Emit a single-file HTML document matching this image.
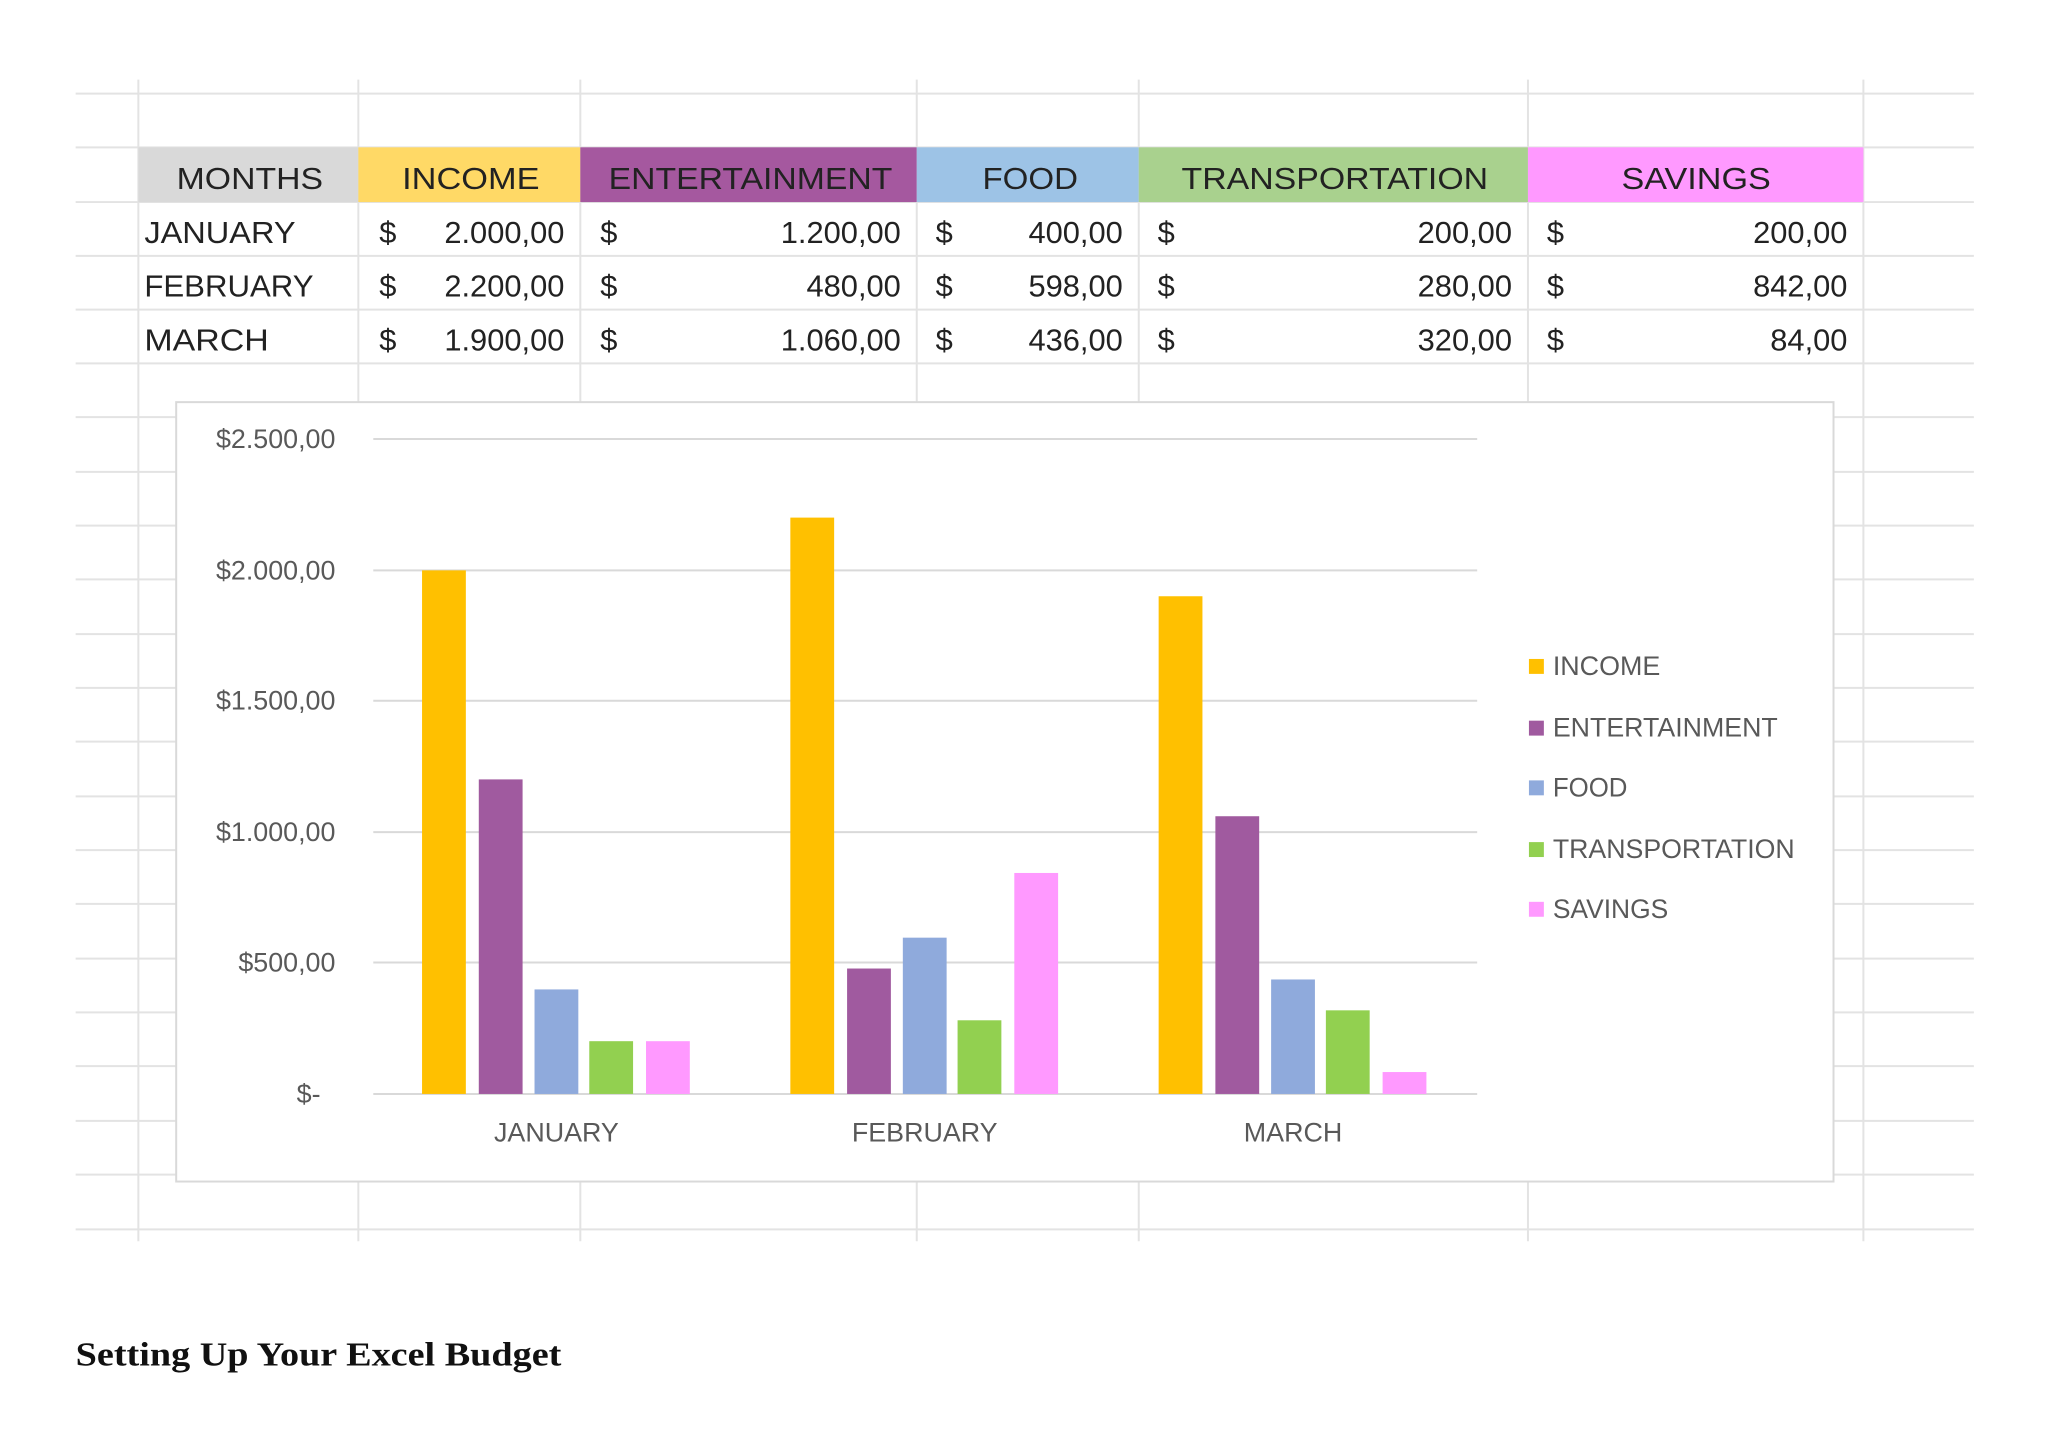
<!DOCTYPE html>
<html><head><meta charset="utf-8"><style>
html,body{margin:0;padding:0;background:#fff;}
svg{display:block;}
</style></head><body>
<svg width="2048" height="1451" viewBox="0 0 2048 1451" xmlns="http://www.w3.org/2000/svg" font-family="Liberation Sans, sans-serif">
<rect width="2048" height="1451" fill="#fff"/>
<g transform="scale(0.9954)">
<g stroke="#e3e3e3" stroke-width="2">
<line x1="76" y1="94" x2="1983" y2="94"/>
<line x1="76" y1="148" x2="1983" y2="148"/>
<line x1="76" y1="203" x2="1983" y2="203"/>
<line x1="76" y1="257" x2="1983" y2="257"/>
<line x1="76" y1="311" x2="1983" y2="311"/>
<line x1="76" y1="365" x2="1983" y2="365"/>
<line x1="76" y1="419" x2="1983" y2="419"/>
<line x1="76" y1="474" x2="1983" y2="474"/>
<line x1="76" y1="528" x2="1983" y2="528"/>
<line x1="76" y1="582" x2="1983" y2="582"/>
<line x1="76" y1="637" x2="1983" y2="637"/>
<line x1="76" y1="691" x2="1983" y2="691"/>
<line x1="76" y1="745" x2="1983" y2="745"/>
<line x1="76" y1="800" x2="1983" y2="800"/>
<line x1="76" y1="854" x2="1983" y2="854"/>
<line x1="76" y1="908" x2="1983" y2="908"/>
<line x1="76" y1="963" x2="1983" y2="963"/>
<line x1="76" y1="1017" x2="1983" y2="1017"/>
<line x1="76" y1="1071" x2="1983" y2="1071"/>
<line x1="76" y1="1126" x2="1983" y2="1126"/>
<line x1="76" y1="1180" x2="1983" y2="1180"/>
<line x1="76" y1="1235" x2="1983" y2="1235"/>
<line x1="139" y1="80" x2="139" y2="1247"/>
<line x1="360" y1="80" x2="360" y2="1247"/>
<line x1="583" y1="80" x2="583" y2="1247"/>
<line x1="921" y1="80" x2="921" y2="1247"/>
<line x1="1144" y1="80" x2="1144" y2="1247"/>
<line x1="1535" y1="80" x2="1535" y2="1247"/>
<line x1="1872" y1="80" x2="1872" y2="1247"/>
</g>
<rect x="139" y="148" width="221" height="55" fill="#d9d9d9"/>
<rect x="360" y="148" width="223" height="55" fill="#ffd966"/>
<rect x="583" y="148" width="338" height="55" fill="#a5589f"/>
<rect x="921" y="148" width="223" height="55" fill="#9dc3e6"/>
<rect x="1144" y="148" width="391" height="55" fill="#a9d18e"/>
<rect x="1535" y="148" width="337" height="55" fill="#ff99ff"/>
<g font-size="31" fill="#222" text-anchor="middle">
<text x="251" y="190" textLength="147" lengthAdjust="spacingAndGlyphs">MONTHS</text>
<text x="473" y="190" textLength="138" lengthAdjust="spacingAndGlyphs">INCOME</text>
<text x="754" y="190" textLength="285" lengthAdjust="spacingAndGlyphs">ENTERTAINMENT</text>
<text x="1035" y="190" textLength="96" lengthAdjust="spacingAndGlyphs">FOOD</text>
<text x="1341" y="190" textLength="308" lengthAdjust="spacingAndGlyphs">TRANSPORTATION</text>
<text x="1704" y="190" textLength="150" lengthAdjust="spacingAndGlyphs">SAVINGS</text>
</g>
<g font-size="31" fill="#222">
<text x="145" y="244" textLength="152" lengthAdjust="spacingAndGlyphs">JANUARY</text>
<text x="145" y="298" textLength="170" lengthAdjust="spacingAndGlyphs">FEBRUARY</text>
<text x="145" y="352" textLength="125" lengthAdjust="spacingAndGlyphs">MARCH</text>
<text x="381" y="244">$</text><text x="381" y="298">$</text><text x="381" y="352">$</text>
<text x="603" y="244">$</text><text x="603" y="298">$</text><text x="603" y="352">$</text>
<text x="940" y="244">$</text><text x="940" y="298">$</text><text x="940" y="352">$</text>
<text x="1163" y="244">$</text><text x="1163" y="298">$</text><text x="1163" y="352">$</text>
<text x="1554" y="244">$</text><text x="1554" y="298">$</text><text x="1554" y="352">$</text>
</g>
<g font-size="31" fill="#222" text-anchor="end">
<text x="567" y="244">2.000,00</text><text x="567" y="298">2.200,00</text><text x="567" y="352">1.900,00</text>
<text x="905" y="244">1.200,00</text><text x="905" y="298">480,00</text><text x="905" y="352">1.060,00</text>
<text x="1128" y="244">400,00</text><text x="1128" y="298">598,00</text><text x="1128" y="352">436,00</text>
<text x="1519" y="244">200,00</text><text x="1519" y="298">280,00</text><text x="1519" y="352">320,00</text>
<text x="1856" y="244">200,00</text><text x="1856" y="298">842,00</text><text x="1856" y="352">84,00</text>
</g>
<rect x="177" y="404" width="1665" height="783" fill="#fff" stroke="#d9d9d9" stroke-width="2"/>
<g stroke="#d9d9d9" stroke-width="2">
<line x1="375" y1="441" x2="1484" y2="441"/>
<line x1="375" y1="573" x2="1484" y2="573"/>
<line x1="375" y1="704" x2="1484" y2="704"/>
<line x1="375" y1="836" x2="1484" y2="836"/>
<line x1="375" y1="967" x2="1484" y2="967"/>
<line x1="375" y1="1099" x2="1484" y2="1099"/>
</g>
<g font-size="27" fill="#595959" text-anchor="end">
<text x="337" y="450">$2.500,00</text>
<text x="337" y="582">$2.000,00</text>
<text x="337" y="713">$1.500,00</text>
<text x="337" y="845">$1.000,00</text>
<text x="337" y="976">$500,00</text>
<text x="322" y="1108">$-</text>
</g>
<g>
<rect x="424" y="573" width="44" height="526" fill="#ffc000"/>
<rect x="481" y="783" width="44" height="316" fill="#a05a9f"/>
<rect x="537" y="994" width="44" height="105" fill="#8faadc"/>
<rect x="592" y="1046" width="44" height="53" fill="#92d050"/>
<rect x="649" y="1046" width="44" height="53" fill="#ff99ff"/>
<rect x="794" y="520" width="44" height="579" fill="#ffc000"/>
<rect x="851" y="973" width="44" height="126" fill="#a05a9f"/>
<rect x="907" y="942" width="44" height="157" fill="#8faadc"/>
<rect x="962" y="1025" width="44" height="74" fill="#92d050"/>
<rect x="1019" y="877" width="44" height="222" fill="#ff99ff"/>
<rect x="1164" y="599" width="44" height="500" fill="#ffc000"/>
<rect x="1221" y="820" width="44" height="279" fill="#a05a9f"/>
<rect x="1277" y="984" width="44" height="115" fill="#8faadc"/>
<rect x="1332" y="1015" width="44" height="84" fill="#92d050"/>
<rect x="1389" y="1077" width="44" height="22" fill="#ff99ff"/>
</g>
<g font-size="27" fill="#595959" text-anchor="middle">
<text x="559" y="1147">JANUARY</text>
<text x="929" y="1147">FEBRUARY</text>
<text x="1299" y="1147">MARCH</text>
</g>
<g>
<rect x="1536" y="662" width="15" height="15" fill="#ffc000"/>
<rect x="1536" y="724" width="15" height="15" fill="#a05a9f"/>
<rect x="1536" y="784" width="15" height="15" fill="#8faadc"/>
<rect x="1536" y="846" width="15" height="15" fill="#92d050"/>
<rect x="1536" y="906" width="15" height="15" fill="#ff99ff"/>
</g>
<g font-size="27" fill="#595959">
<text x="1560" y="678" textLength="108" lengthAdjust="spacingAndGlyphs">INCOME</text>
<text x="1560" y="740" textLength="226" lengthAdjust="spacingAndGlyphs">ENTERTAINMENT</text>
<text x="1560" y="800" textLength="75" lengthAdjust="spacingAndGlyphs">FOOD</text>
<text x="1560" y="862" textLength="243" lengthAdjust="spacingAndGlyphs">TRANSPORTATION</text>
<text x="1560" y="922" textLength="116" lengthAdjust="spacingAndGlyphs">SAVINGS</text>
</g>
<text x="76" y="1372" font-family="Liberation Serif, serif" font-weight="bold" font-size="34" fill="#111" textLength="488" lengthAdjust="spacingAndGlyphs">Setting Up Your Excel Budget</text>
</g>
</svg>
</body></html>
